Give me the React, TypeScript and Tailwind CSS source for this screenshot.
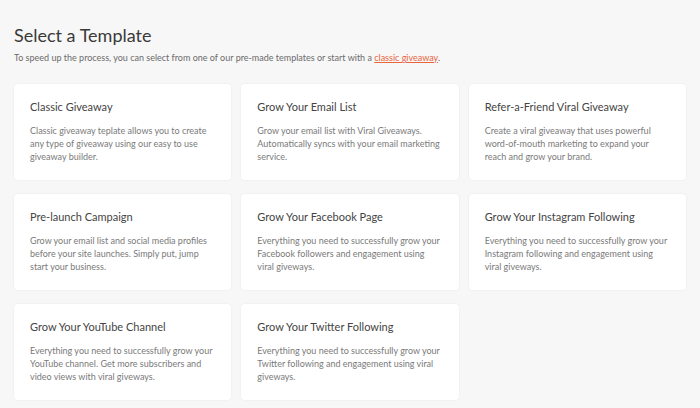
const templates = [
  {
    title: "Classic Giveaway",
    text: "Classic giveaway teplate allows you to create any type of giveaway using our easy to use giveaway builder.",
  },
  {
    title: "Grow Your Email List",
    text: "Grow your email list with Viral Giveaways. Automatically syncs with your email marketing service.",
  },
  {
    title: "Refer-a-Friend Viral Giveaway",
    text: "Create a viral giveaway that uses powerful word-of-mouth marketing to expand your reach and grow your brand.",
  },
  {
    title: "Pre-launch Campaign",
    text: "Grow your email list and social media profiles before your site launches. Simply put, jump start your business.",
  },
  {
    title: "Grow Your Facebook Page",
    text: "Everything you need to successfully grow your Facebook followers and engagement using viral giveways.",
  },
  {
    title: "Grow Your Instagram Following",
    text: "Everything you need to successfully grow your Instagram following and engagement using viral giveways.",
  },
  {
    title: "Grow Your YouTube Channel",
    text: "Everything you need to successfully grow your YouTube channel. Get more subscribers and video views with viral giveways.",
  },
  {
    title: "Grow Your Twitter Following",
    text: "Everything you need to successfully grow your Twitter following and engagement using viral giveways.",
  },
]

export default function App() {
  return (
    <div className="min-h-[408px] bg-[#f7f7f7] px-[14px] pt-[24px] pb-[8px] font-['Lato',sans-serif]">
      <h1 className="text-[18px] leading-[22px] text-[#3a3a3a]">Select a Template</h1>
      <p className="mt-[6px] text-[9px] leading-[12px] text-[#6b6b6b]">
        To speed up the process, you can select from one of our pre-made templates or start with a{" "}
        <a href="#" className="text-[#e8643c] underline">
          classic giveaway
        </a>
        .
      </p>

      <div className="mt-[20px] grid grid-cols-3 gap-x-[10px] gap-y-[14px]">
        {templates.map((tpl) => (
          <div
            key={tpl.title}
            className="h-[96px] rounded-[4px] bg-white px-[16px] pt-[16px] shadow-[0_0_2px_rgba(0,0,0,0.08)]"
          >
            <h3 className="text-[11px] leading-[14px] text-[#444]">{tpl.title}</h3>
            <p className="mt-[10px] text-[9px] leading-[13px] text-[#7a7a7a]">{tpl.text}</p>
          </div>
        ))}
      </div>
    </div>
  )
}
